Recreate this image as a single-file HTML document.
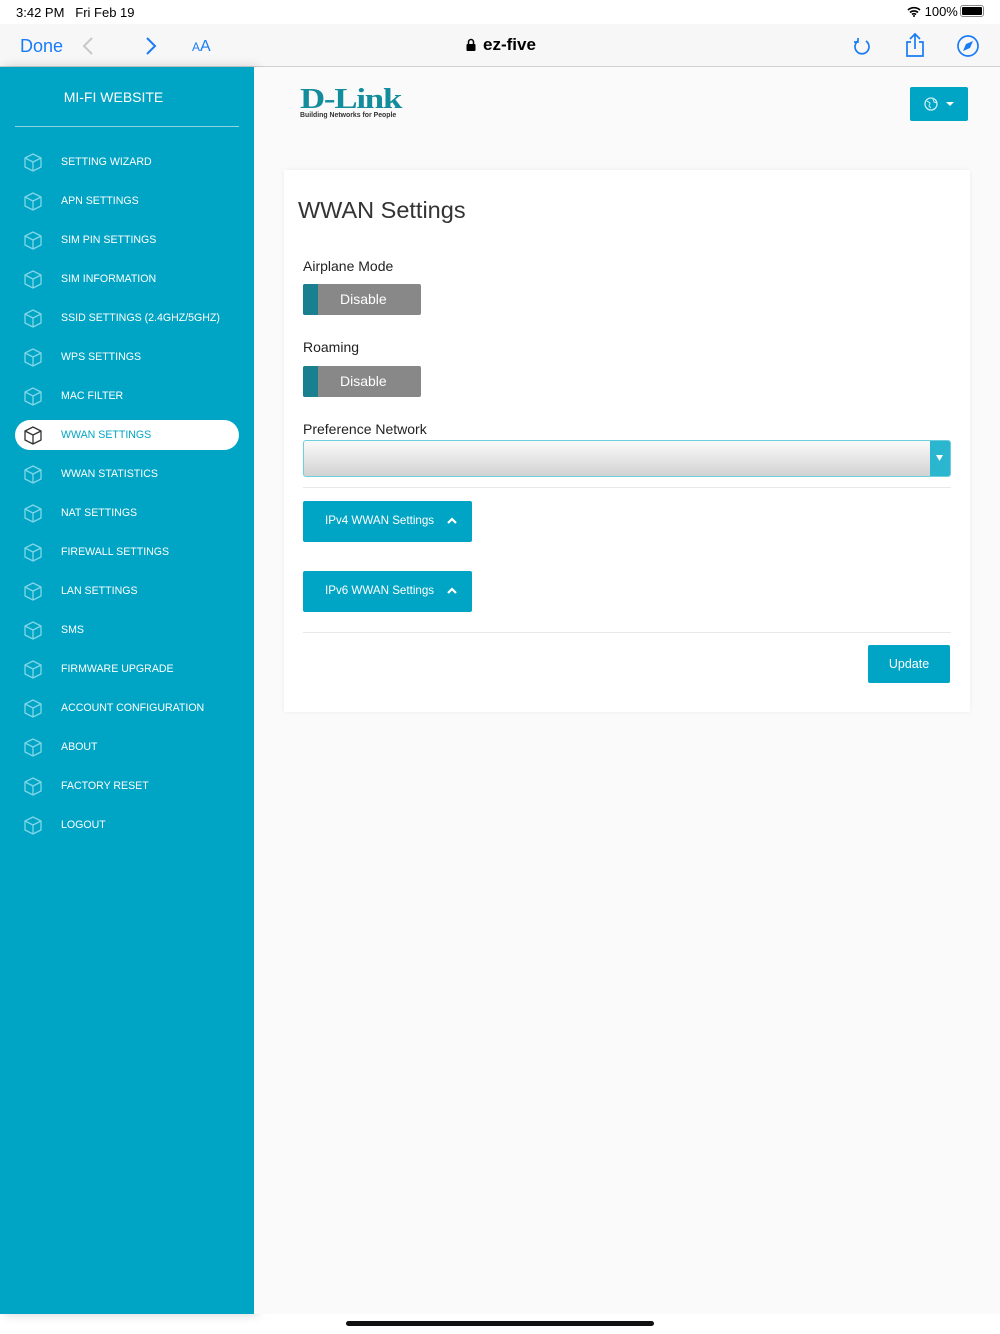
<!DOCTYPE html>
<html><head><meta charset="utf-8"><style>
*{margin:0;padding:0;box-sizing:border-box}
body{width:1000px;height:1334px;position:relative;background:#fff;font-family:"Liberation Sans",sans-serif;overflow:hidden}
.abs{position:absolute}
.status{top:0;left:0;width:1000px;height:24px;font-size:13px;color:#000}
.bar{top:24px;left:0;width:1000px;height:43px;background:#f7f7f7;border-bottom:1px solid #d0d0d0}
.side{top:67px;left:0;width:254px;height:1247px;background:#00a5c5;box-shadow:4px 0 10px rgba(0,0,0,.18)}
.main{top:67px;left:254px;width:746px;height:1247px;background:#fafafa}
.item{position:absolute;left:0;width:254px;height:30px;color:#fff;font-size:10.6px;line-height:30px}
.item span{position:absolute;left:61px}
.item svg{position:absolute;left:23px;top:5px}
.sel{left:15px;width:224px;background:#fff;border-radius:15px;color:#00a5c5}
.sel span{left:46px}.sel svg{left:8px}
.tog{position:absolute;left:303px;width:118px;height:31px;background:#888;border-radius:2px;color:#fff;font-size:14px;line-height:31px}
.tog:before{content:"";position:absolute;left:0;top:0;width:15px;height:31px;background:#1a7f8e;border-radius:2px 0 0 2px}
.tog span{position:absolute;left:37px}
.lbl{position:absolute;left:303px;font-size:14px;color:#222}
.btn{position:absolute;left:303px;width:169px;height:41px;background:#00a5c5;border-radius:2px;color:#fff;font-size:12px;line-height:41px}
.btn span{position:absolute;left:22px}
</style></head><body>
<div class="abs status"><span class="abs" style="left:16px;top:5px">3:42 PM&nbsp;&nbsp;&nbsp;Fri Feb 19</span>
<span class="abs" style="left:907px;top:4px">
<svg width="14" height="11" viewBox="0 0 14 11" style="vertical-align:-1px"><path d="M1 4a9 9 0 0112 0M3 6.5a6 6 0 018 0M5 8.5a3 3 0 014 0" stroke="#000" stroke-width="1.6" fill="none"/><circle cx="7" cy="10" r="1" fill="#000"/></svg> 100%</span>
<span class="abs" style="left:960px;top:5px;width:24px;height:12px;border:1px solid #888;border-radius:3px;padding:1px"><span style="display:block;width:100%;height:100%;background:#000;border-radius:1px"></span></span></div>
<div class="abs bar">
<span class="abs" style="left:20px;top:12px;font-size:18px;color:#1a7cf5">Done</span>
<svg class="abs" style="left:82px;top:13px" width="12" height="18"><path d="M10 1L2 9l8 8" stroke="#c8c8c8" stroke-width="2" fill="none"/></svg>
<svg class="abs" style="left:145px;top:13px" width="12" height="18"><path d="M2 1l8 8-8 8" stroke="#1a7cf5" stroke-width="2" fill="none"/></svg>
<span class="abs" style="left:192px;top:14px;color:#1a7cf5;font-size:12px">A<span style="font-size:16px">A</span></span>
<svg class="abs" style="left:466px;top:14px" width="10" height="14"><rect x="0.5" y="6" width="9" height="7" rx="1" fill="#000"/><path d="M2.5 6V4a2.5 2.5 0 015 0v2" stroke="#000" stroke-width="1.5" fill="none"/></svg>
<span class="abs" style="left:483px;top:11px;font-size:17px;color:#000;font-weight:bold">ez-five</span>
<svg class="abs" style="left:852px;top:12px" width="20" height="20"><path d="M14 5a7 7 0 11-8 0" stroke="#1a7cf5" stroke-width="1.7" fill="none"/><path d="M6 2v4H2" stroke="#1a7cf5" stroke-width="1.7" fill="none"/></svg>
<svg class="abs" style="left:904px;top:8px" width="22" height="26"><path d="M7 10H3v14h16V10h-4M11 17V2M6 7l5-5 5 5" stroke="#1a7cf5" stroke-width="1.7" fill="none"/></svg>
<svg class="abs" style="left:956px;top:10px" width="24" height="24"><circle cx="12" cy="12" r="10" stroke="#1a7cf5" stroke-width="1.7" fill="none"/><path d="M17 7l-7 3-3 7 7-3z" fill="#1a7cf5"/></svg>
</div>
<div class="abs side">
<div class="abs" style="left:0;width:227px;top:22px;text-align:center;color:#fff;font-size:14px">MI-FI WEBSITE</div>
<div class="abs" style="left:15px;top:59px;width:224px;height:1px;background:#8fd3e2"></div>
</div>
<div class="abs main">
<div class="abs" style="left:46px;top:18px;font-family:'Liberation Serif',serif;font-weight:bold;font-size:29px;color:#138c9c;letter-spacing:-1px;line-height:28px;transform:scaleX(1.2);transform-origin:left">D-Link</div>
<div class="abs" style="left:46px;top:43px;font-size:7.5px;font-weight:bold;color:#333;transform:scaleX(0.92);transform-origin:left">Building Networks for People</div>
<div class="abs" style="left:656px;top:20px;width:58px;height:34px;background:#00a5c5;border-radius:2px">
<svg class="abs" style="left:14px;top:10px" width="14" height="14"><circle cx="7" cy="7" r="6" stroke="#cdeef5" stroke-width="1.3" fill="none"/><path d="M3 4l3 2-1 3 2 2M9 2l1 3 3 1" stroke="#cdeef5" stroke-width="1" fill="none"/></svg>
<svg class="abs" style="left:36px;top:15px" width="8" height="5"><path d="M0 0h8L4 4z" fill="#fff"/></svg></div>
<div class="abs" style="left:30px;top:103px;width:686px;height:542px;background:#fff;box-shadow:0 0 4px rgba(0,0,0,.06)"></div>
</div>
<div class="abs" style="left:298px;top:197px;font-size:23.5px;color:#333">WWAN Settings</div>
<div class="lbl" style="top:258px">Airplane Mode</div>
<div class="tog" style="top:284px"><span>Disable</span></div>
<div class="lbl" style="top:339px">Roaming</div>
<div class="tog" style="top:366px"><span>Disable</span></div>
<div class="lbl" style="top:421px">Preference Network</div>
<div class="abs" style="left:303px;top:440px;width:648px;height:37px;border:1px solid #6ccfdd;border-radius:3px;background:linear-gradient(#fafafa,#d2d2d2)"></div>
<div class="abs" style="left:930px;top:441px;width:20px;height:35px;background:#2ab6cf;border-radius:0 2px 2px 0"><svg class="abs" style="left:6px;top:14px" width="8" height="6"><path d="M0 0h7L3.5 6z" fill="#fff"/></svg></div>
<div class="abs" style="left:303px;top:487px;width:648px;height:1px;background:#e8e8e8"></div>
<div class="btn" style="top:501px"><span style="font-size:11.6px;top:-1px">IPv4 WWAN Settings</span><svg class="abs" style="left:144px;top:16px" width="10" height="8"><path d="M1 6l4-4 4 4" stroke="#fff" stroke-width="2.2" fill="none"/></svg></div>
<div class="btn" style="top:571px"><span style="font-size:11.6px;top:-1px">IPv6 WWAN Settings</span><svg class="abs" style="left:144px;top:16px" width="10" height="8"><path d="M1 6l4-4 4 4" stroke="#fff" stroke-width="2.2" fill="none"/></svg></div>
<div class="abs" style="left:303px;top:632px;width:648px;height:1px;background:#e8e8e8"></div>
<div class="abs" style="left:868px;top:645px;width:82px;height:38px;background:#00a5c5;border-radius:2px;color:#fff;font-size:12.5px;line-height:38px;text-align:center">Update</div>
<div id="menu"></div>
<div class="abs" style="left:346px;top:1321px;width:308px;height:5px;background:#111;border-radius:3px"></div>
<script>
var items=["SETTING WIZARD","APN SETTINGS","SIM PIN SETTINGS","SIM INFORMATION","SSID SETTINGS (2.4GHZ/5GHZ)","WPS SETTINGS","MAC FILTER","WWAN SETTINGS","WWAN STATISTICS","NAT SETTINGS","FIREWALL SETTINGS","LAN SETTINGS","SMS","FIRMWARE UPGRADE","ACCOUNT CONFIGURATION","ABOUT","FACTORY RESET","LOGOUT"];
var h="";items.forEach(function(t,i){var s=i==7;var c=s?"#333":"#7fd6e6";
h+='<div class="item'+(s?' sel':'')+'" style="top:'+(147+i*39)+'px"><svg width="20" height="20" viewBox="0 0 20 20"><path d="M10 2l8 4v9l-8 4-8-4V6zM2 6l8 4 8-4M10 10v9" stroke="'+c+'" stroke-width="1.3" fill="none" stroke-linejoin="round"/></svg><span>'+t+'</span></div>';});
document.getElementById("menu").innerHTML=h;
</script>
</body></html>
